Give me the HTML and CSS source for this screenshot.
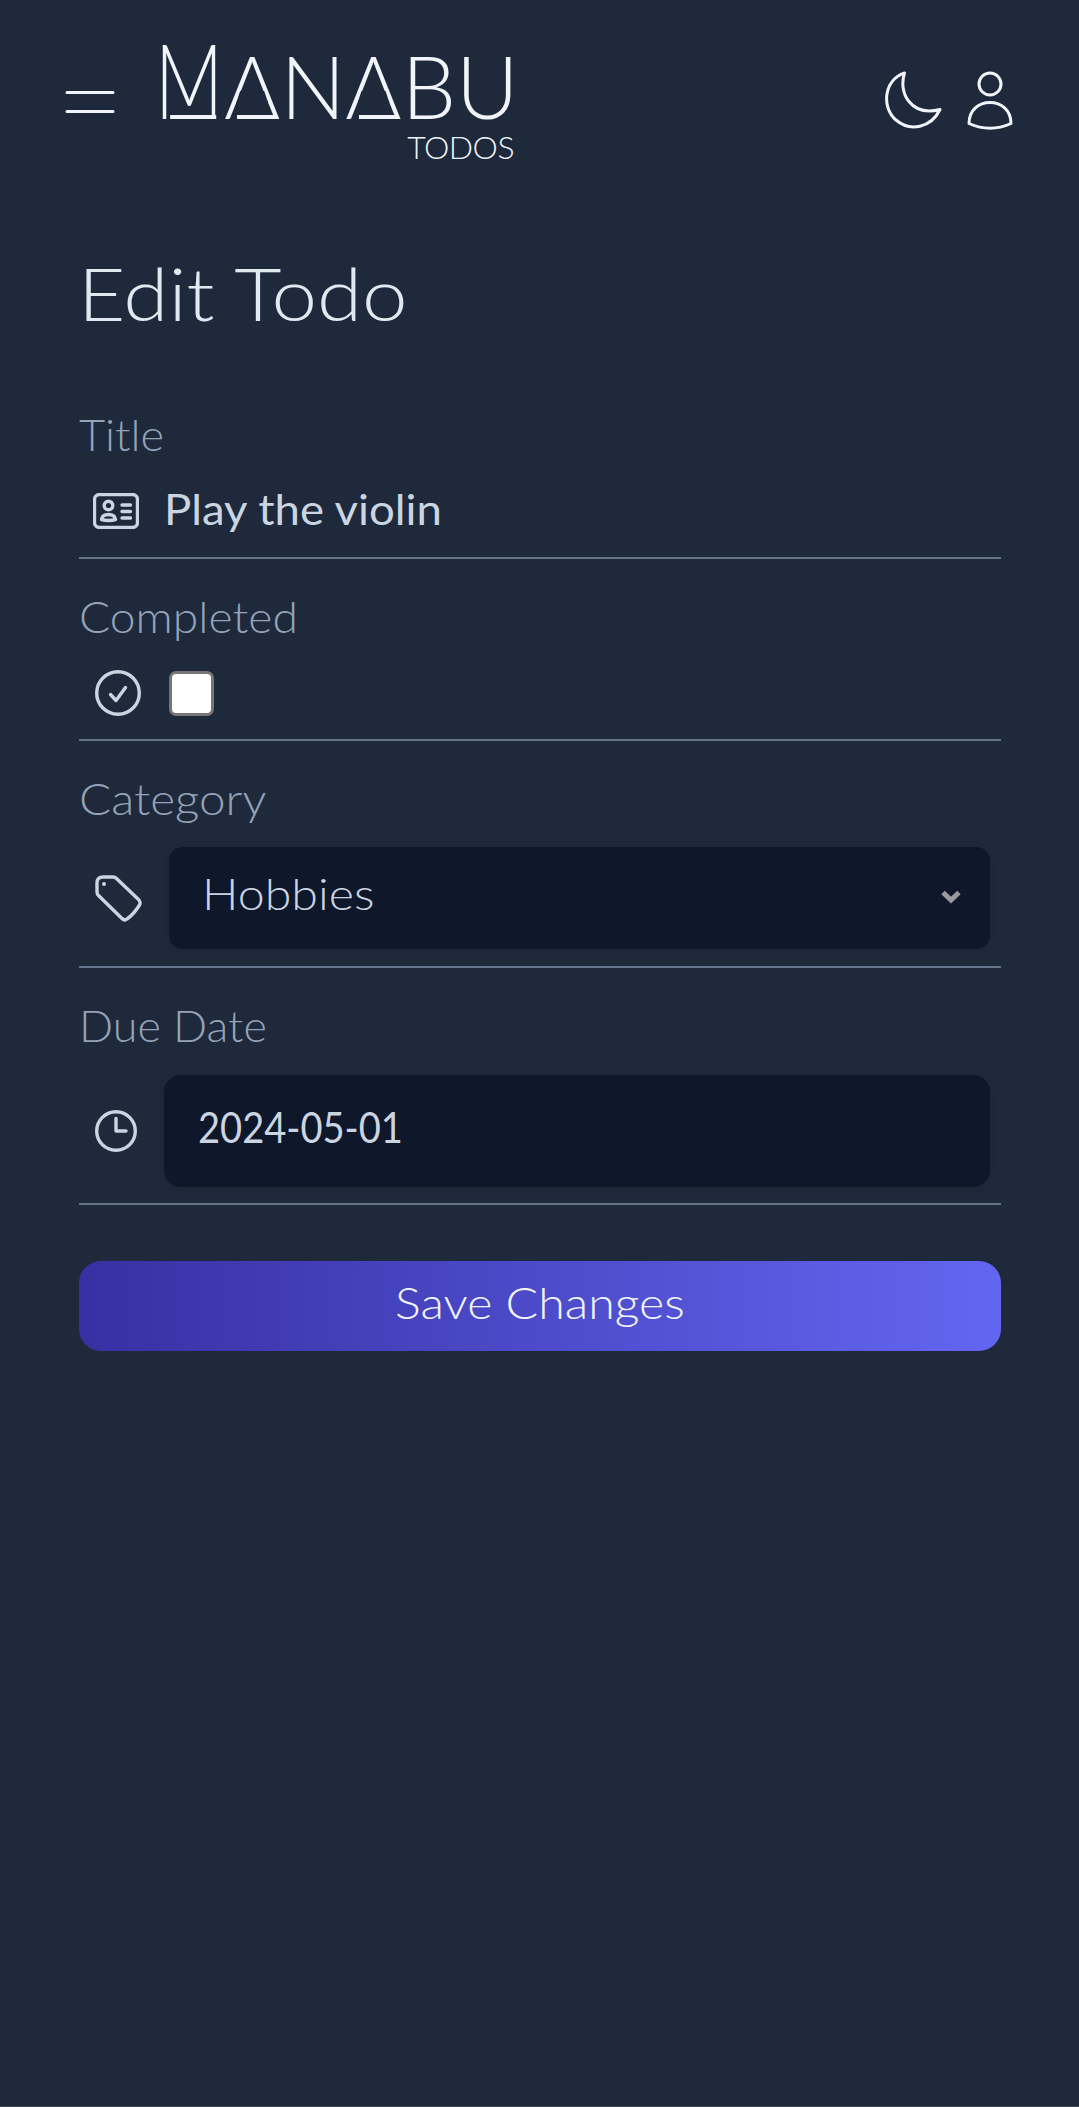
FILE: index.html
```html
<!DOCTYPE html>
<html lang="en">
<head>
<meta charset="utf-8">
<title>Manabu Todos - Edit Todo</title>
<link rel="stylesheet" href="styles.css">
</head>
<body>
<header class="topbar">
  <svg class="menu" viewBox="0 0 50 24"><path d="M2 2.5H48M2 21.5H48"/></svg>
  <div class="logo">
    <div class="brand"><span class="initial">M</span><span class="rest"><span class="delta">A</span>N<span class="delta">A</span>BU</span></div>
    <div class="sub">TODOS</div>
  </div>
  <nav class="actions">
    <svg class="moon" viewBox="0 0 58 58"><path d="M19.5 2C13 22 26 46 55 38.5C46 57 25 61 11 49C-4 36 -1 9 19.500 2Z"/></svg>
    <svg class="user" viewBox="0 0 46 60"><circle cx="23" cy="13" r="11"/><path d="M2 52.500C2 39 12 31.500 23 31.500S44 39 44 52.500Q23 62 2 52.500Z"/></svg>
  </nav>
</header>
<main class="page">
  <h1 class="heading">Edit Todo</h1>
  <form class="form">
    <div class="field">
      <div class="label l-title">Title</div>
      <div class="row row-title">
        <svg class="icon card" viewBox="0 0 46 36"><rect x="1.500" y="1.500" width="43" height="33" rx="5"/><circle cx="15.500" cy="12.500" r="4.300"/><path d="M8.500 26.500Q9 21.500 15.500 21.500T22.500 26.500Q15.500 28.500 8.500 26.500ZM29 12H37.500M29 18.500H37.500M29 25H37.500"/></svg>
        <span class="value v-title">Play the violin</span>
      </div>
    </div>
    <div class="field">
      <div class="label l-completed">Completed</div>
      <div class="row row-check">
        <svg class="icon check" viewBox="0 0 46 46"><circle cx="23" cy="23" r="21.300"/><path d="M15.500 24.500L21 30.500L30.500 17.500"/></svg>
        <span class="box" role="checkbox" aria-checked="false"></span>
      </div>
    </div>
    <div class="field">
      <div class="label l-category">Category</div>
      <div class="row row-select">
        <svg class="icon tag" viewBox="0 0 47 47"><path d="M8 2H18Q20 2 21.500 3.500L43.500 24.500Q46 27 44.500 30Q39 39 32 44Q29.500 46 27 43.500L3.500 20.500Q2 19 2 17V8Q2 2 8 2Z"/><circle class="dot" cx="9" cy="9" r="2"/></svg>
        <div class="control select">
          <span class="value v-select">Hobbies</span>
          <svg class="chevron" viewBox="0 0 20 14"><path d="M2 2.500L10 10L18 2.500"/></svg>
        </div>
      </div>
    </div>
    <div class="field">
      <div class="label l-date">Due Date</div>
      <div class="row row-date">
        <svg class="icon clock" viewBox="0 0 42 42"><circle cx="21" cy="21" r="19.300"/><path d="M21 8.500V21H31"/></svg>
        <div class="control date"><span class="value v-date">2024-05-01</span></div>
      </div>
    </div>
    <button class="save" type="button"><span class="save-text">Save Changes</span></button>
  </form>
</main>
</body>
</html>
```
FILE: styles.css
```css
* { box-sizing: border-box; }

body {
  margin: 0;
  min-height: 2107px;
  background: #1e293b;
  border-bottom: 1px solid #454b56;
  color: #cbd5e1;
  font-family: Lato, "Open Sans", sans-serif;
  font-weight: 300;
}

svg {
  display: block;
  flex: none;
  fill: none;
  stroke: currentColor;
  stroke-width: 3;
  stroke-linecap: round;
  stroke-linejoin: round;
}
.icon { stroke-width: 3.4; }

.topbar {
  display: flex;
  align-items: center;
  height: 203px;
  padding: 0 66px 0 65px;
  color: #f1f5f9;
}
.menu { width: 50px; height: 24px; }
.logo {
  display: flex;
  flex-direction: column;
  align-items: flex-end;
  width: 359px;
  margin-left: 40px;
}
.brand {
  display: flex;
  align-items: baseline;
  width: 100%;
  line-height: 90px;
}
.initial {
  position: relative;
  flex: none;
  width: 69px;
  font-size: 104px;
  transform: scaleX(.72);
  transform-origin: left;
}
/* foot of the M */
.initial::after {
  content: "";
  position: absolute;
  left: 21px;
  top: 81px;
  width: 64px;
  height: 4px;
  background: currentColor;
}
.rest {
  font-size: 86px;
  white-space: nowrap;
}
.delta {
  display: inline-block;
  position: relative;
}
/* the crossbar of each A is lowered to its feet */
.delta::before {
  content: "";
  position: absolute;
  left: calc(50% - 16px);
  top: 50px;
  width: 32px;
  height: 12px;
  background: #1e293b;
  clip-path: polygon(4px 0, 28px 0, 32px 100%, 0 100%);
}
.delta::after {
  content: "";
  position: absolute;
  right: 3px;
  top: 74px;
  width: 40px;
  height: 4px;
  background: currentColor;
}
.sub {
  height: 38px;
  font-size: 32px;
  line-height: 32px;
  letter-spacing: -.5px;
}
.actions {
  display: flex;
  align-items: center;
  gap: 24px;
  margin-left: auto;
  padding-bottom: 2px;
}
.moon { width: 58px; height: 58px; margin-bottom: 1px; }
.user { width: 46px; height: 60px; }

.page { padding: 41px 78px 0 79px; }
.heading {
  width: fit-content;
  margin: 0 0 66px;
  color: #e2e8f0;
  font-size: 72px;
  line-height: 98px;
  font-weight: 300;
}
.heading, .label, .value { transform-origin: left; }
.heading { transform: scaleX(1.135); margin-left: -1px; }

.form { font-size: 43px; line-height: 54px; }
.field { margin-bottom: 29px; }
.label {
  width: fit-content;
  padding-top: 2px;
  color: #94a3b8;
}
.l-title { padding-top: 0; transform: scaleX(1.05); }
.l-completed { transform: scaleX(1.075); }
.l-category { transform: scaleX(1.107); }
.l-date { transform: scaleX(1.045); }
.row {
  display: flex;
  align-items: center;
  padding: 0 11px 0 16px;
  border-bottom: 2px solid #64748b;
}
.row-title { height: 97px; padding: 0 11px 2px 14px; }
.row-check { height: 97px; padding-top: 3px; }
.row-select { height: 142px; padding-top: 4px; }
.row-date { height: 152px; padding-top: 5px; }

.card { width: 46px; height: 36px; margin: 5px 25px 0 0; }
.check { width: 46px; height: 46px; margin-right: 28px; }
.tag { width: 47px; height: 47px; margin-right: 27px; }
.clock { width: 42px; height: 42px; margin-right: 27px; }
.dot { fill: currentColor; stroke: none; }

.v-title { font-weight: 400; transform: scaleX(1.06); }
.v-select { transform: scaleX(1.124); }
.v-date { font-weight: 400; transform: scaleX(.885); }

.box {
  width: 45px;
  height: 45px;
  background: #fff;
  border: 3px solid #767676;
  border-radius: 7px;
}
.control {
  display: flex;
  flex: 1;
  align-items: center;
  background: #0f172a;
  box-shadow: 0 2px 8px rgba(0, 0, 0, .1);
}
.select {
  height: 102px;
  padding: 0 29px 8px 33px;
  border-radius: 14px;
}
.date {
  height: 112px;
  padding: 0 34px 7px;
  border-radius: 17px;
}
.chevron {
  width: 20px;
  height: 14px;
  margin: 6px 0 0 auto;
  color: #9a9a9d;
  stroke-width: 5;
  stroke-linecap: butt;
  stroke-linejoin: miter;
}
.save {
  display: block;
  width: 100%;
  height: 90px;
  margin-top: 56px;
  padding: 0 0 6px;
  border: 0;
  border-radius: 22px;
  background: linear-gradient(to right, #3730a3, #6366f1);
  color: #f1f5f9;
  font: inherit;
}
.save-text {
  display: inline-block;
  transform: scaleX(1.124);
}
```
